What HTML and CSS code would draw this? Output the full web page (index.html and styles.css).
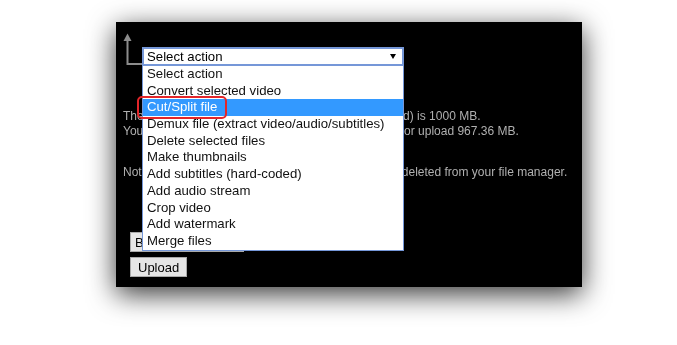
FILE: index.html
```html
<!DOCTYPE html>
<html lang="en">
<head>
    <meta charset="UTF-8">
    <meta name="viewport" content="width=device-width, initial-scale=1.0">
    <title>File Manager</title>
    <link rel="stylesheet" href="styles.css">
</head>
<body>
    <!-- painel do gerenciador -->
    <div class="panel">
        <div class="picker">
            <svg class="pointer" width="19" height="33" viewBox="0 0 19 33">
                <polygon points="4.5,0.5 8.5,8 0.5,8" fill="#8c8c8c"/>
                <polyline points="4.5,7 4.5,31 19,31" fill="none" stroke="#8c8c8c" stroke-width="2"/>
            </svg>
            <div class="select">
                <span>Select action</span>
                <svg class="caret" width="6" height="5" viewBox="0 0 6 5"><polygon points="0,0 6,0 3,5" fill="#000"/></svg>
            </div>

            <ul class="options">
                <li>Select action</li>
                <li>Convert selected video</li>
                <li class="active">Cut/Split file</li>
                <li>Demux file (extract video/audio/subtitles)</li>
                <li>Delete selected files</li>
                <li>Make thumbnails</li>
                <li>Add subtitles (hard-coded)</li>
                <li>Add audio stream</li>
                <li>Crop video</li>
                <li>Add watermark</li>
                <li>Merge files</li>
                <span class="mark"></span>
            </ul>
        </div>

        <p class="info">The maximum file size for one upload (account limited) is 1000 MB.<br>You have used 32.64 MB, you can still convert items or upload 967.36 MB.</p>
        <p class="note">Note: files older than 180 days will get automatically deleted from your file manager.</p>

        <div class="actions">
            <button class="btn browse">Browse for files</button>
            <button class="btn">Upload</button>
        </div>
    </div>
</body>
</html>
```

FILE: styles.css
```css
html{ background-color: #fff;}
body{ margin: 0; min-height: 345px; padding-top: 22px; box-sizing: border-box; background-color: #fff; font-family: "Liberation Sans", Arial, sans-serif;}
.panel{ position: relative; margin: 0 0 0 116px; width: 466px; height: 265px; box-sizing: border-box; padding: 11px 0 10px 7px; background-color: #000; filter: drop-shadow(0 7px 14px rgba(0,0,0,0.8)); display: flex; flex-direction: column;}
.picker{ position: relative; display: flex; align-items: flex-start; height: 33px;}
.pointer{ display: block;}
.select{ margin-top: 14px; width: 262px; height: 19px; box-sizing: border-box; border: 2px solid #7597d8; background-color: #fff; display: flex; align-items: center; justify-content: space-between; padding: 0 6px 0 3px; font-size: 13.2px; color: #000;}
.caret{ display: block;}
.options{ position: absolute; top: 33px; left: 19px; width: 262px; box-sizing: border-box; margin: 0; padding: 0; list-style: none; background-color: #fff; border: 1px solid #7597d8; border-top: none; font-size: 13.2px; color: #111; z-index: 2;}
.options li{ height: 16.7px; line-height: 16.7px; padding-left: 4px; white-space: nowrap;}
.options .active{ background-color: #3399ff; color: #fff;}
.mark{ position: absolute; left: -6px; top: 30px; width: 90px; height: 23px; box-sizing: border-box; border: 2px solid #e3262a; border-radius: 5px;}
.info{ margin: 42.5px 0 0 0; font-size: 12px; line-height: 15px; color: #b0b0b0; white-space: nowrap;}
.note{ margin: 26px 0 0 0; font-size: 12px; line-height: 15px; color: #b0b0b0; white-space: nowrap;}
.actions{ margin: 52.5px 0 0 7px; display: flex; flex-direction: column; align-items: flex-start; gap: 5px;}
.btn{ height: 20px; padding: 0 7px; border: 1px solid #a9a9a9; background-color: #e5e5e5; font-family: "Liberation Sans", Arial, sans-serif; font-size: 13px; color: #000;}
.browse{ width: 114px; text-align: left; padding-left: 4px;}
```
